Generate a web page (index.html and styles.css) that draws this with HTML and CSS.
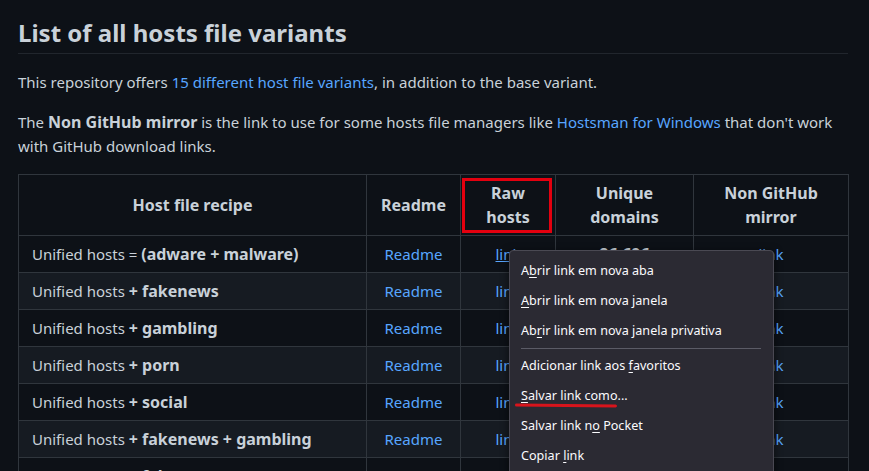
FILE: index.html
```html
<!DOCTYPE html>
<html lang="en">
<head>
<meta charset="utf-8">
<title>Hosts file variants</title>
<link rel="stylesheet" href="styles.css">
</head>
<body>
<main class="markdown">
  <h2 class="title">List of all hosts file variants</h2>
  <p>This repository offers <a href="#">15 different host file variants</a>, in addition to the base variant.</p>
  <p>The <strong>Non GitHub mirror</strong> is the link to use for some hosts file managers like <a href="#">Hostsman for Windows</a> that don't work with GitHub download links.</p>
  <table class="hosts">
    <colgroup>
      <col class="c-recipe"><col class="c-readme"><col class="c-raw"><col class="c-unique"><col class="c-mirror">
    </colgroup>
    <thead>
      <tr>
        <th>Host file recipe</th>
        <th>Readme</th>
        <th class="raw-head">Raw<br>hosts<span class="red-box"></span></th>
        <th>Unique<br>domains</th>
        <th>Non GitHub<br>mirror</th>
      </tr>
    </thead>
    <tbody>
      <tr><td>Unified hosts = <strong>(adware + malware)</strong></td><td><a href="#">Readme</a></td><td><a href="#" class="hovered">link</a></td><td><strong>86,696</strong></td><td><a href="#">link</a></td></tr>
      <tr><td>Unified hosts <strong>+ fakenews</strong></td><td><a href="#">Readme</a></td><td><a href="#">link</a></td><td>88,902</td><td><a href="#">link</a></td></tr>
      <tr><td>Unified hosts <strong>+ gambling</strong></td><td><a href="#">Readme</a></td><td><a href="#">link</a></td><td>89,342</td><td><a href="#">link</a></td></tr>
      <tr><td>Unified hosts <strong>+ porn</strong></td><td><a href="#">Readme</a></td><td><a href="#">link</a></td><td>162,713</td><td><a href="#">link</a></td></tr>
      <tr><td>Unified hosts <strong>+ social</strong></td><td><a href="#">Readme</a></td><td><a href="#">link</a></td><td>89,087</td><td><a href="#">link</a></td></tr>
      <tr><td>Unified hosts <strong>+ fakenews + gambling</strong></td><td><a href="#">Readme</a></td><td><a href="#">link</a></td><td>91,548</td><td><a href="#">link</a></td></tr>
      <tr><td>Unified hosts <strong>+ fakenews + porn</strong></td><td><a href="#">Readme</a></td><td><a href="#">link</a></td><td>164,919</td><td><a href="#">link</a></td></tr>
    </tbody>
  </table>
</main>

<div class="context-menu">
  <div class="menu-item">A<u>b</u>rir link em nova aba</div>
  <div class="menu-item"><u>A</u>brir link em nova janela</div>
  <div class="menu-item">Ab<u>r</u>ir link em nova janela privativa</div>
  <div class="menu-sep"></div>
  <div class="menu-item">Adicionar link aos <u>f</u>avoritos</div>
  <div class="menu-item marked"><u>S</u>alvar link como...<span class="red-line"></span></div>
  <div class="menu-item">Salvar link n<u>o</u> Pocket</div>
  <div class="menu-item">Copiar <u>l</u>ink</div>
</div>
</body>
</html>
```

FILE: styles.css
```css
html, body {
  margin: 0;
  padding: 0;
  background: #0d1117;
  height: 100%;
  overflow: hidden;
}

body {
  font-family: "Noto Sans", "Open Sans", sans-serif;
  font-size: 15px;
  line-height: 24px;
  color: #c9d1d9;
}

.markdown {
  width: 830px;
  padding: 18px 0 0 18px;
}

.title {
  margin: 0;
  font-size: 24px;
  line-height: 30px;
  font-weight: 700;
  padding-bottom: 5px;
  border-bottom: 1px solid #21262d;
}

p {
  margin: 16px 0 0 0;
}

a {
  color: #58a6ff;
  text-decoration: none;
}

strong {
  font-weight: 700;
  font-size: 16px;
}

.hosts {
  margin-top: 16px;
  width: 830px;
  table-layout: fixed;
  border-collapse: collapse;
  border-spacing: 0;
}

.c-recipe { width: 348px; }
.c-readme { width: 94px; }
.c-raw { width: 95px; }
.c-unique { width: 138px; }
.c-mirror { width: 155px; }

.hosts th,
.hosts td {
  border: 1px solid #30363d;
  padding: 6px 13px;
  text-align: center;
  white-space: nowrap;
}

.hosts th {
  font-weight: 700;
  font-size: 16px;
}

.hosts td:first-child {
  text-align: left;
}

.hosts tbody tr {
  background: #0d1117;
  border-top: 1px solid #21262d;
}

.hosts tbody tr:nth-child(2n) {
  background: #161b22;
}

.raw-head {
  position: relative;
}

.red-box {
  position: absolute;
  left: 1px;
  right: 3px;
  top: 3px;
  bottom: 2px;
  border: 3px solid #e3000f;
}

.hovered {
  text-decoration: underline;
}

.context-menu {
  position: absolute;
  left: 509px;
  top: 250px;
  width: 263px;
  height: 240px;
  padding-top: 5px;
  background: #2b2a33;
  border: 1px solid #4a4953;
  border-radius: 4px;
  box-shadow: 0 2px 8px rgba(0, 0, 0, 0.6);
  color: #fbfbfe;
  font-family: "Noto Sans", "Open Sans", sans-serif;
  font-size: 12.6px;
}

.menu-item {
  position: relative;
  height: 30px;
  line-height: 30px;
  padding-left: 11px;
  white-space: nowrap;
}

.menu-item u {
  text-decoration: underline;
  text-underline-offset: 2px;
}

.menu-sep {
  height: 1px;
  margin: 2px 12px 2px 11px;
  background: #5b5b66;
}

.red-line {
  position: absolute;
  left: 5px;
  top: 23px;
  width: 102px;
  height: 3px;
  border-radius: 2px;
  background: #d8141c;
  transform: rotate(0.6deg);
}
```
